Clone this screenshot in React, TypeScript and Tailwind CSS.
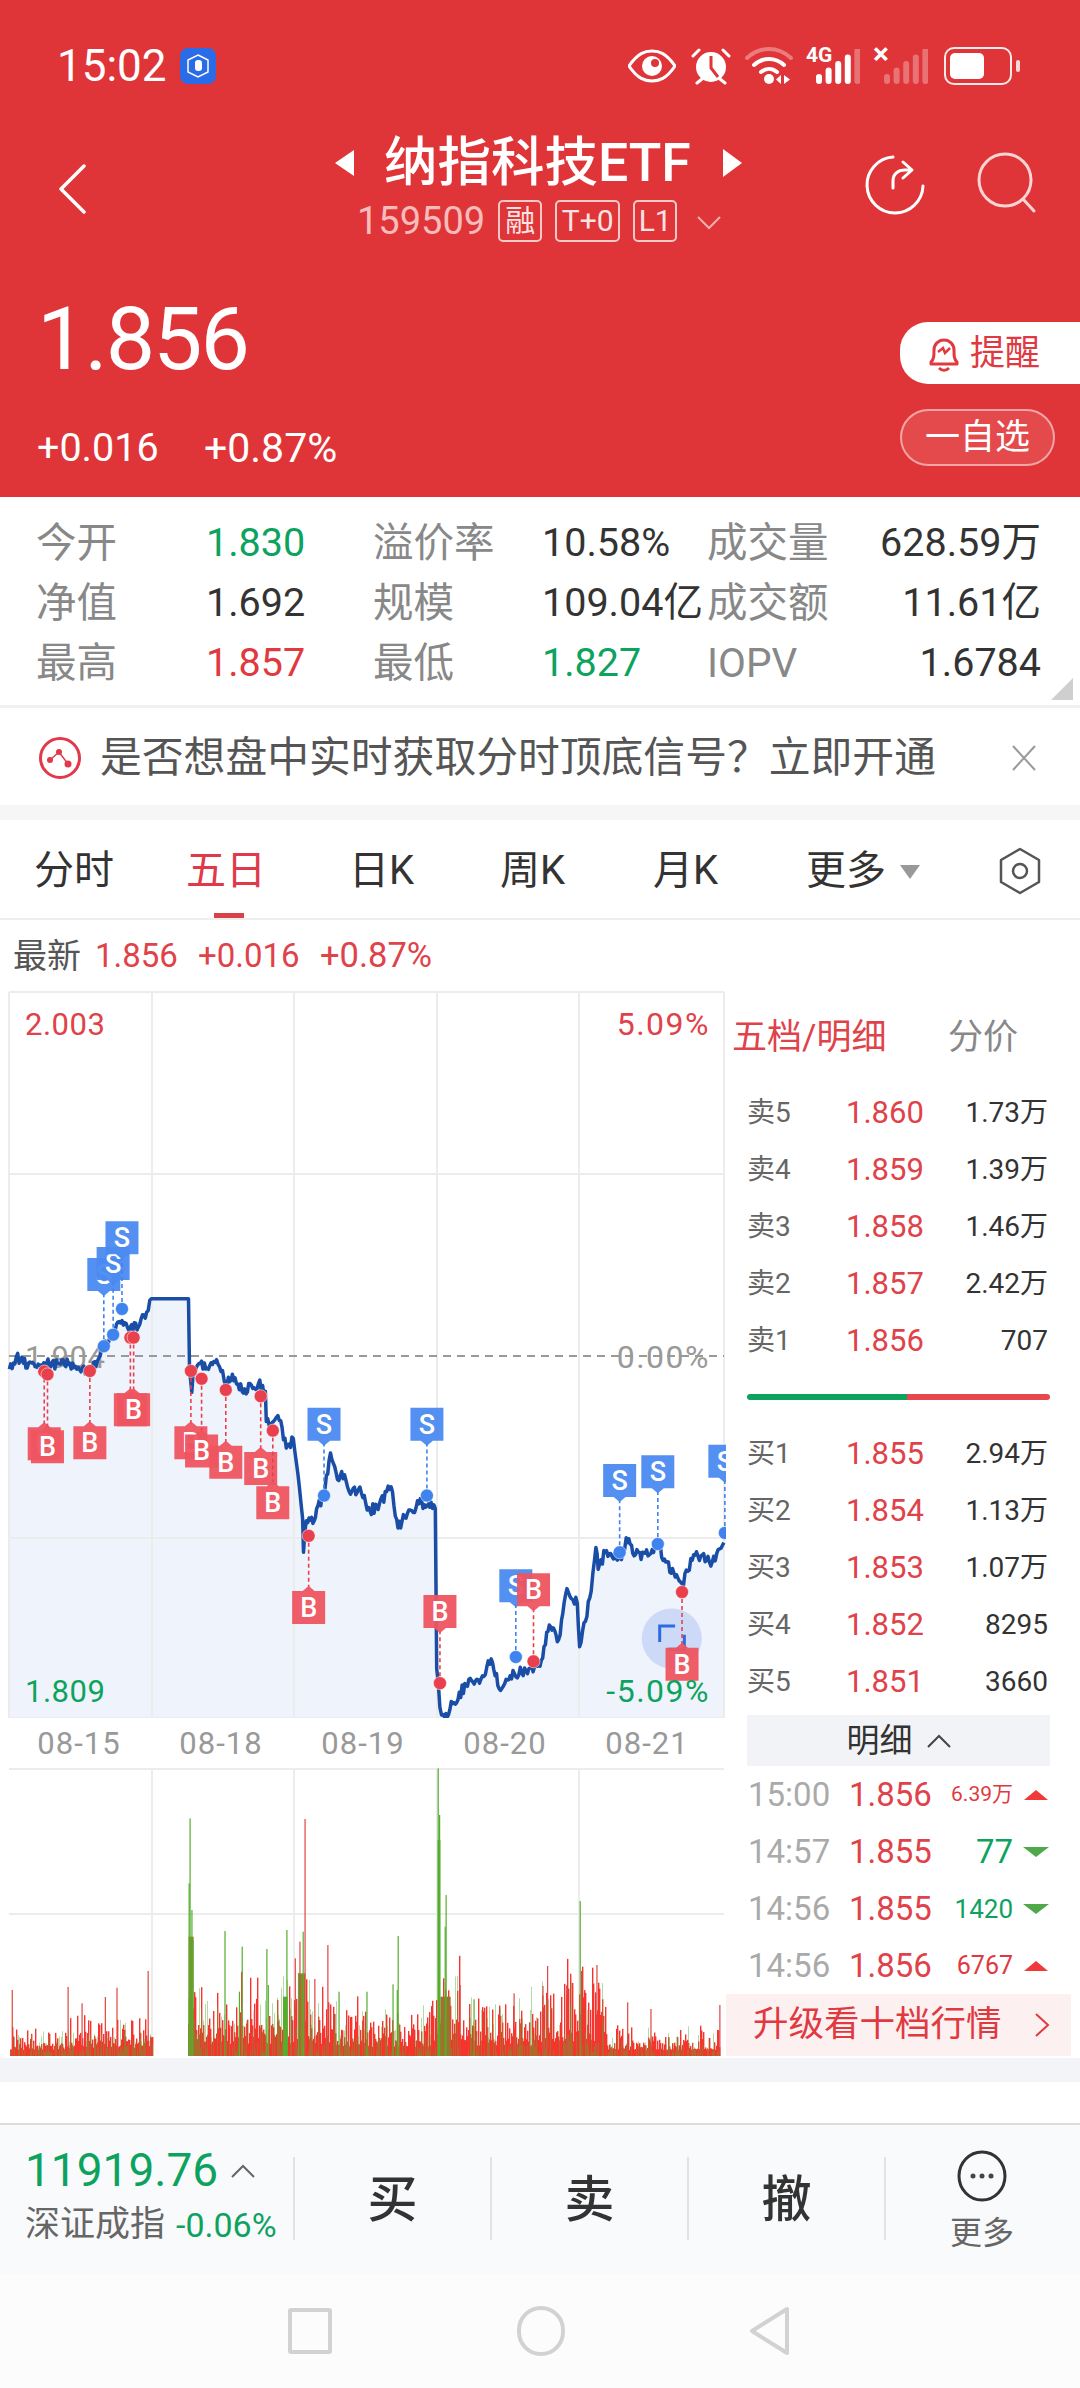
import type { ReactNode } from "react";

// crop coordinates from the chart zoom -> page pixels inside the svg
const X = (z: number) => z / 2.148;
const Y = (z: number) => z / 2.063 - 0;

const seeded = (seed: number) => {
  let s = seed;
  return () => {
    s = (s * 1664525 + 1013904223) % 4294967296;
    return s / 4294967296;
  };
};

const linePoints: [number, number][] = [
  [20, 782], [35, 757], [50, 770], [70, 768], [85, 775], [100, 770], [130, 772], [150, 770], [165, 782], [195, 785],
  [215, 755], [235, 720], [250, 690], [262, 682], [280, 695], [300, 690], [315, 665], [325, 637], [405, 637], [407, 780],
  [412, 830], [415, 790], [430, 770], [445, 780], [462, 768], [478, 785], [482, 808], [505, 800], [520, 828], [540, 815],
  [555, 812], [570, 828], [572, 890], [600, 888], [615, 945], [630, 925], [640, 1000], [650, 1090], [652, 1160], [658, 1095],
  [675, 1095], [680, 1070], [695, 1045], [710, 955], [725, 1010], [740, 1000], [750, 1035], [770, 1030], [795, 1075], [815, 1060],
  [840, 1025], [855, 1110], [875, 1080], [900, 1060], [920, 1060], [935, 1070], [938, 1400], [945, 1480], [955, 1500], [975, 1470],
  [1010, 1420], [1030, 1430], [1055, 1380], [1075, 1445], [1105, 1410], [1130, 1405], [1160, 1395], [1180, 1310], [1200, 1340], [1218, 1235],
  [1240, 1265], [1245, 1355], [1270, 1240], [1280, 1150], [1285, 1195], [1300, 1160], [1335, 1175], [1345, 1130], [1365, 1165], [1395, 1165],
  [1410, 1140], [1430, 1180], [1465, 1225], [1490, 1165], [1530, 1180], [1555, 1140],
];

const buildLine = () => {
  const rnd = seeded(7);
  const out: string[] = [];
  linePoints.forEach(([x, y], i) => {
    if (i === 0) {
      out.push(`${X(x).toFixed(1)},${Y(y).toFixed(1)}`);
      return;
    }
    const [px, py] = linePoints[i - 1];
    const steps = Math.max(1, Math.round((x - px) / 3));
    const flat = px === 325;
    for (let k = 1; k <= steps; k++) {
      const t = k / steps;
      const noise = flat || k === steps || steps === 1 ? 0 : (rnd() - 0.5) * 22;
      out.push(`${X(px + (x - px) * t).toFixed(1)},${Y(py + (y - py) * t + noise).toFixed(1)}`);
    }
  });
  return out;
};

const line = buildLine();

const sTags = [
  [223, 553, 735], [243, 530, 711], [262, 477, 658], [696, 862, 1043], [917, 862, 1043],
  [1108, 1195, 1376], [1331, 978, 1160], [1413, 960, 1143], [1557, 938, 1120],
];
const bBelow = [
  [95, 902, 787], [102, 908, 793], [193, 900, 786], [280, 832, 717], [287, 832, 717], [410, 900, 786],
  [433, 917, 802], [485, 940, 825], [560, 953, 838], [586, 1024, 909], [663, 1240, 1126], [1465, 1357, 1242],
];
const bAbove = [
  [945, 1248, 1430], [1146, 1203, 1385],
];

const Tag = ({ x, top, dot, label, pointUp }: { x: number; top: number; dot: number; label: string; pointUp: boolean }) => {
  const color = label === "S" ? "#4a8af0" : "#ee5460";
  const stem = label === "S" ? "#3f83ee" : "#e8404c";
  const l = X(x) - 16.5;
  const t = Y(top);
  const w = 33;
  const h = 33;
  const poly = pointUp
    ? `${l},${t} ${X(x) - 6},${t} ${X(x)},${t - 5} ${X(x) + 6},${t} ${l + w},${t} ${l + w},${t + h} ${l},${t + h}`
    : `${l},${t} ${l + w},${t} ${l + w},${t + h} ${X(x) + 6},${t + h} ${X(x)},${t + h + 5} ${X(x) - 6},${t + h} ${l},${t + h}`;
  return (
    <g>
      <line x1={X(x)} x2={X(x)} y1={Y(dot)} y2={pointUp ? t : t + h} stroke={stem} strokeWidth={1.6} strokeDasharray="4 3" />
      <circle cx={X(x)} cy={Y(dot)} r={6.5} fill={stem} stroke="#fff" strokeOpacity={0.5} strokeWidth={1} />
      <polygon points={poly} fill={color} fillOpacity={0.95} />
      <text x={X(x)} y={t + 26} textAnchor="middle" fontSize={27} fontWeight={500} fill="#fff">
        {label}
      </text>
    </g>
  );
};

const PriceChart = () => (
  <svg width={726} height={728} className="block">
    <polygon points={`${X(20)},${Y(1503)} ${line.join(" ")} ${X(1555)},${Y(1503)}`} fill="#eff3fc" />
    <g stroke="#ececec" strokeWidth={2}>
      <line x1={9} x2={724} y1={2} y2={2} />
      <line x1={9} x2={724} y1={184} y2={184} />
      <line x1={9} x2={724} y1={548} y2={548} />
      <line x1={9} x2={724} y1={728} y2={728} />
      {[9, 152, 294, 437, 579, 724].map((x) => (
        <line key={x} x1={x} x2={x} y1={2} y2={728} />
      ))}
    </g>
    <text x={25} y={45} fontSize={31} letterSpacing={0.5} fill="#e0424a">2.003</text>
    <text x={710} y={45} fontSize={32} letterSpacing={1.5} fill="#e0424a" textAnchor="end">5.09%</text>
    <text x={25} y={378} fontSize={31} letterSpacing={0.5} fill="#999">1.904</text>
    <text x={710} y={378} fontSize={32} letterSpacing={1.5} fill="#999" textAnchor="end">0.00%</text>
    <line x1={9} x2={724} y1={366} y2={366} stroke="#999" strokeWidth={2} strokeDasharray="8 6" />
    <polyline points={line.join(" ")} fill="none" stroke="#1a4ea6" strokeWidth={3.5} strokeLinejoin="round" />
    <text x={25} y={712} fontSize={31} letterSpacing={0.5} fill="#0da35f">1.809</text>
    <circle cx={X(1443)} cy={Y(1338)} r={30} fill="#3f78e8" fillOpacity={0.2} />
    <path d={`M${X(1417)} ${Y(1345)}V${Y(1312)}H${X(1450)}`} fill="none" stroke="#2f6be0" strokeWidth={3} />
    <path d={`M${X(1436)} ${Y(1360)}H${X(1470)}V${Y(1330)}`} fill="none" stroke="#2f6be0" strokeWidth={3} />
    {sTags.map(([x, t, d]) => (
      <Tag key={`s${x}`} x={x} top={t} dot={d} label="S" pointUp={false} />
    ))}
    {bBelow.map(([x, t, d]) => (
      <Tag key={`b${x}`} x={x} top={t} dot={d} label="B" pointUp />
    ))}
    {bAbove.map(([x, t, d]) => (
      <Tag key={`a${x}`} x={x} top={t} dot={d} label="B" pointUp={false} />
    ))}
    <text x={710} y={712} fontSize={32} letterSpacing={1.5} fill="#0da35f" textAnchor="end">-5.09%</text>
  </svg>
);

const greenSpikes = [
  [407, 235], [405, 430], [411, 510], [413, 600], [482, 573], [519, 620], [572, 627], [575, 735], [615, 570], [640, 700], [650, 575],
  [854, 588], [843, 733], [852, 750], [940, 85], [943, 225], [957, 465], [955, 560], [1245, 483], [1017, 778], [787, 755], [727, 755], [513, 755],
];
const redSpikes = [
  [25, 750], [145, 741], [175, 790], [225, 771], [250, 743], [317, 693], [654, 237], [643, 605], [633, 655], [703, 615], [675, 717],
  [987, 735], [1103, 760], [1165, 738], [1175, 678], [1216, 736], [1248, 693], [1281, 675], [1347, 787], [1397, 807], [1545, 795], [545, 810],
];
// thick olive/green lumps right after the opens, [from, to, top, colour]
const lumps: [number, number, number, string][] = [
  [405, 416, 590, "#9a7a2c"], [608, 618, 770, "#55ae2e"], [640, 656, 700, "#8c8a2e"], [940, 946, 300, "#55ae2e"], [946, 968, 770, "#a0702c"],
];

const VolumeChart = () => {
  const rnd = seeded(42);
  const bars: ReactNode[] = [];
  const base = 288;
  for (let x = 10; x < 720; x += 1) {
    if (x > 152 && x < 188) continue;
    const z = x * 2.148;
    let env = 12;
    if (z > 150 && z < 330) env = 20;
    if (z > 400 && z < 720) env = 36;
    if (z > 720 && z < 940) env = 24;
    if (z > 940 && z < 1010) env = 46;
    if (z > 1010 && z < 1160) env = 28;
    if (z > 1160 && z < 1300) env = 44;
    const h = env * 0.25 + 3 + rnd() * rnd() * env * 2.2;
    bars.push(<rect key={`r${x}`} x={x} y={base - h} width={1.4} height={h} fill="#f5352d" />);
    if (rnd() > 0.45) {
      const g = 3 + rnd() * rnd() * env * 2.6;
      bars.push(<rect key={`g${x}`} x={x} y={base - g} width={0.8} height={g} fill="#55ae2e" fillOpacity={0.55} />);
    }
  }
  return (
    <svg width={726} height={290} className="block">
      <g stroke="#ececec" strokeWidth={2}>
        <line x1={9} x2={724} y1={1} y2={1} />
        <line x1={9} x2={724} y1={146} y2={146} />
        {[152, 294, 437, 579].map((x) => (
          <line key={x} x1={x} x2={x} y1={1} y2={288} />
        ))}
      </g>
      {bars}
      {lumps.map(([a, b, t, c]) => (
        <rect key={`l${a}`} x={X(a)} y={t / 3 - 28} width={X(b) - X(a)} height={288 - (t / 3 - 28)} fill={c} />
      ))}
      {redSpikes.map(([x, t]) => (
        <rect key={`rs${x}`} x={X(x)} y={t / 3 - 28} width={1.2} height={288 - (t / 3 - 28)} fill="#e0463f" />
      ))}
      {greenSpikes.map(([x, t]) => (
        <rect key={`gs${x}`} x={X(x)} y={t / 3 - 28} width={1.2} height={288 - (t / 3 - 28)} fill="#55ae2e" />
      ))}
    </svg>
  );
};

const Signal = ({ dim }: { dim: number }) => (
  <svg width={44} height={36} viewBox="0 0 44 36">
    {[0, 1, 2, 3, 4].map((i) => {
      const h = 10 + i * 6.5;
      return <rect key={i} x={i * 9.6} y={35 - h} width={6} height={h} rx={3} fill="#fff" fillOpacity={i >= dim ? 0.3 : 1} />;
    })}
  </svg>
);

const StatusBar = () => (
  <div className="flex h-[130px] items-center pl-[57px] pr-[60px] pt-[2px]">
    <span className="text-[44px] leading-none text-white">15:02</span>
    <span className="ml-[13px] flex h-[36px] w-[36px] items-center justify-center rounded-[8px] bg-[#2a6be8]">
      <svg width={24} height={26} viewBox="0 0 24 26">
        <polygon points="12,2 22,7 22,19 12,24 2,19 2,7" fill="none" stroke="#fff" strokeWidth={1.5} />
        <rect x={9} y={7} width={7} height={11} rx={3} fill="#fff" />
      </svg>
    </span>
    <div className="ml-auto flex items-center">
      <svg width={48} height={34} viewBox="0 0 48 34">
        <path d="M1 17C10 4 17 2 24 2s14 2 23 15c-9 13-16 15-23 15S10 30 1 17Z" fill="none" stroke="#fff" strokeWidth={3} />
        <circle cx={24} cy={17} r={10} fill="#fff" />
        <circle cx={27} cy={14} r={4} fill="#e03538" />
      </svg>
      <svg width={40} height={38} viewBox="0 0 40 38" className="ml-[15px]">
        <circle cx={20} cy={20} r={15} fill="#fff" />
        <path d="M20 9v12l7 9" fill="none" stroke="#e03538" strokeWidth={3} />
        <path d="M2 9l6-6M38 9l-6-6M6 36l5-4M34 36l-5-4" stroke="#fff" strokeWidth={3} strokeLinecap="round" />
      </svg>
      <svg width={48} height={38} viewBox="0 0 48 38" className="ml-[14px]">
        <path d="M2 11C15 -1 33 -1 46 11" fill="none" stroke="#fff" strokeOpacity={0.35} strokeWidth={4} strokeLinecap="round" />
        <path d="M9 18c9-8 21-8 30 0" fill="none" stroke="#fff" strokeWidth={4} strokeLinecap="round" />
        <path d="M16 25c5-4 11-4 16 0" fill="none" stroke="#fff" strokeWidth={4} strokeLinecap="round" />
        <circle cx={24} cy={32} r={5} fill="#fff" />
        <path d="M36 28v9l-5-4.500ZM39 28v9l6-4.500Z" fill="#fff" />
      </svg>
      <div className="relative ml-[13px] flex h-[38px] w-[54px] items-end justify-end">
        <span className="absolute left-0 -top-[1px] text-[21px] font-bold leading-[18px] text-white">4G</span>
        <Signal dim={4} />
      </div>
      <div className="relative ml-[14px] flex h-[38px] w-[54px] items-end justify-end">
        <span className="absolute -left-[1px] -top-[2px] text-[30px] font-bold leading-[18px] text-white">×</span>
        <Signal dim={0} />
      </div>
      <div className="ml-[16px] flex h-[38px] w-[68px] items-center rounded-[10px] border-2 border-white/90 p-[4px]">
        <span className="block h-full w-[34px] rounded-[5px] bg-white" />
      </div>
      <span className="ml-[4px] block h-[12px] w-[4px] rounded-[2px] bg-white/80" />
    </div>
  </div>
);

const Badge = ({ children, w }: { children: ReactNode; w: string }) => (
  <span className={`ml-[13px] flex h-[42px] items-center justify-center rounded-[5px] border-2 border-[#f6c9c9] text-[30px] leading-none text-[#fbe3e3] ${w}`}>
    {children}
  </span>
);

const Header = () => (
  <header className="h-[497px] bg-[#e03538] text-white">
    <StatusBar />
    <div className="flex h-[120px]">
      <div className="w-[335px] pl-[58px] pt-[34px]">
        <svg width={30} height={50} viewBox="0 0 30 50">
          <path d="M27 2 4 25l23 23" fill="none" stroke="#fff" strokeWidth={3.500} strokeLinecap="round" strokeLinejoin="round" transform="translate(-1 0)" />
        </svg>
      </div>
      <div className="w-[408px]">
        <div className="flex h-[66px] items-center">
          <span className="h-0 w-0 border-y-[13px] border-r-[19px] border-y-transparent border-r-white" />
          <span className="ml-[30px] whitespace-nowrap text-[53.500px] font-medium leading-none">纳指科技ETF</span>
          <span className="ml-[32px] h-0 w-0 border-y-[14px] border-l-[19px] border-y-transparent border-l-white" />
        </div>
        <div className="flex h-[50px] items-center pl-[22px]">
          <span className="text-[38px] leading-none text-[#f6bcbc]">159509</span>
          <Badge w="w-[44px]">融</Badge>
          <Badge w="w-[65px]">T+0</Badge>
          <Badge w="w-[44px]">L1</Badge>
          <svg width={24} height={14} viewBox="0 0 24 14" className="ml-[20px] mt-[4px]">
            <path d="M1 1l11 11L23 1" fill="none" stroke="#f3b0b0" strokeWidth={2} />
          </svg>
        </div>
      </div>
      <div className="flex flex-1 items-start pl-[122px] pt-[24px]">
        <svg width={60} height={62} viewBox="0 0 60 62">
          <path d="M28 3A28 28 0 1 0 58 32" fill="none" stroke="#fff" strokeWidth={3} strokeLinecap="round" />
          <path d="M28 34v-7c0-7 5-11 12-11h6M38 8l9 8-9 8" fill="none" stroke="#fff" strokeWidth={3} strokeLinecap="round" strokeLinejoin="round" />
        </svg>
        <svg width={62} height={62} viewBox="0 0 62 62" className="ml-[52px] -mt-[2px]">
          <circle cx={28} cy={28} r={26} fill="none" stroke="#fbd4d4" strokeWidth={3} />
          <path d="M46 47l11 12" fill="none" stroke="#fbd4d4" strokeWidth={3} strokeLinecap="round" />
        </svg>
      </div>
    </div>
    <div className="flex justify-between">
      <div className="pl-[37px] pt-[44px]">
        <div className="text-[88px] leading-[90px] tracking-[-2px]">1.856</div>
        <div className="mt-[39px] flex text-[39.500px] leading-[50px]">
          <span className="w-[167px]">+0.016</span>
          <span className="text-[41px]">+0.87%</span>
        </div>
      </div>
      <div className="w-[180px] pt-[72px]">
        <div className="flex h-[62px] items-center rounded-l-[28px] bg-white pl-[27px] text-[35px] leading-none text-[#e0393f]">
          <svg width={34} height={40} viewBox="0 0 34 40" className="mr-[9px]">
            <path d="M4 29c3-3 3-6 3-12a10 10 0 0 1 20 0c0 6 0 9 3 12v2H4Z" fill="none" stroke="#e0393f" strokeWidth={3} strokeLinejoin="round" />
            <path d="M11 19l5-4 2 5 5-5" fill="none" stroke="#e0393f" strokeWidth={2.500} />
            <path d="M12 35c3 3 7 3 10 0" fill="none" stroke="#e0393f" strokeWidth={3} />
          </svg>
          提醒
        </div>
        <div className="mt-[25px] flex h-[57px] w-[155px] items-center justify-center rounded-full border-2 border-[#f3a5a5] bg-[#e44a4c] text-[35px] leading-none">
          一自选
        </div>
      </div>
    </div>
  </header>
);

const stats = [
  ["今开", "1.830", "text-[#0da35f]", "溢价率", "10.58%", "text-[#333]", "成交量", "628.59万"],
  ["净值", "1.692", "text-[#333]", "规模", "109.04亿", "text-[#333]", "成交额", "11.61亿"],
  ["最高", "1.857", "text-[#e0393f]", "最低", "1.827", "text-[#0da35f]", "IOPV", "1.6784"],
];

const Stats = () => (
  <section className="relative h-[211px] border-b-[3px] border-[#f0f0f0] pl-[36px] pr-[39px] pt-[16px]">
    {stats.map((r) => (
      <div key={r[0]} className="grid h-[60px] grid-cols-[170px_167px_169px_165px_1fr_auto] items-center text-[39.500px] leading-none">
        <span className="text-[40.500px] text-[#888]">{r[0]}</span>
        <span className={r[2]}>{r[1]}</span>
        <span className="text-[40.500px] text-[#888]">{r[3]}</span>
        <span className={`whitespace-nowrap ${r[5]}`}>{r[4]}</span>
        <span className="text-[40.500px] text-[#888]">{r[6]}</span>
        <span className="text-right text-[#333]">{r[7]}</span>
      </div>
    ))}
    <span className="absolute bottom-[5px] right-[7px] h-0 w-0 border-b-[22px] border-l-[22px] border-b-[#cfcfcf] border-l-transparent" />
  </section>
);

const Notice = () => (
  <section className="flex h-[97px] items-center pl-[39px] pt-[2px]">
    <svg width={42} height={42} viewBox="0 0 42 42">
      <circle cx={21} cy={21} r={19.500} fill="none" stroke="#e0394a" strokeWidth={3} />
      <path d="M11 23l9-8 9 12" fill="none" stroke="#e0394a" strokeWidth={1.500} />
      <circle cx={11} cy={23} r={3} fill="#e0394a" />
      <circle cx={20} cy={15} r={3} fill="#e0394a" />
      <circle cx={29} cy={27} r={3.500} fill="#e0394a" />
    </svg>
    <span className="ml-[19px] whitespace-nowrap text-[41.800px] leading-none text-[#555]">是否想盘中实时获取分时顶底信号？立即开通</span>
    <svg width={28} height={28} viewBox="0 0 28 28" className="ml-[74px]">
      <path d="M3 2l22 24M25 2 3 26" fill="none" stroke="#999" strokeWidth={2} />
    </svg>
  </section>
);

const tabs = [
  ["分时", "w-[152px] text-[#333]"],
  ["五日", "w-[163px] text-[#e0394a]"],
  ["日K", "w-[151px] text-[#333]"],
  ["周K", "w-[153px] text-[#333]"],
  ["月K", "w-[153px] text-[#333]"],
];

const Tabs = () => (
  <nav className="relative flex h-[100px] items-center border-b-2 border-[#eee] pl-[34px] pt-[4px] text-[40px] leading-none">
    {tabs.map(([t, c]) => (
      <span key={t} className={c}>{t}</span>
    ))}
    <span className="text-[#333]">更多</span>
    <span className="ml-[14px] mt-[2px] h-0 w-0 border-x-[10px] border-t-[14px] border-x-transparent border-t-[#999]" />
    <svg width={44} height={48} viewBox="0 0 44 48" className="ml-[78px]">
      <polygon points="22,2 41,13 41,35 22,46 3,35 3,13" fill="none" stroke="#555" strokeWidth={2.500} strokeLinejoin="round" />
      <circle cx={22} cy={24} r={7} fill="none" stroke="#555" strokeWidth={2.500} />
    </svg>
    <span className="absolute bottom-0 left-[214px] h-[5px] w-[30px] bg-[#d9404a]" />
  </nav>
);

const sells = [
  ["卖5", "1.860", "1.73万"], ["卖4", "1.859", "1.39万"], ["卖3", "1.858", "1.46万"], ["卖2", "1.857", "2.42万"], ["卖1", "1.856", "707"],
];
const buys = [
  ["买1", "1.855", "2.94万"], ["买2", "1.854", "1.13万"], ["买3", "1.853", "1.07万"], ["买4", "1.852", "8295"], ["买5", "1.851", "3660"],
];
const ticks = [
  ["15:00", "1.856", "6.39万", "text-[21px] text-[#e0393f]", true],
  ["14:57", "1.855", "77", "text-[33px] text-[#0da35f]", false],
  ["14:56", "1.855", "1420", "text-[26px] text-[#0da35f]", false],
  ["14:56", "1.856", "6767", "text-[25px] text-[#e0393f]", true],
] as const;

const Quote = ({ r }: { r: string[] }) => (
  <div className="flex h-[57px] items-center pl-[21px] leading-none">
    <span className="w-[99px] text-[28px] text-[#666]">{r[0]}</span>
    <span className="w-[81px] text-[31px] text-[#e0424a]">{r[1]}</span>
    <span className="w-[121px] text-right text-[28px] text-[#333]">{r[2]}</span>
  </div>
);

const OrderBook = () => (
  <aside className="w-[354px]">
    <div className="flex h-[94px] items-center pl-[6px] text-[35px] leading-none">
      <span className="w-[216px] text-[#e0424a]">五档/明细</span>
      <span className="text-[#888]">分价</span>
    </div>
    {sells.map((r) => (
      <Quote key={r[0]} r={r} />
    ))}
    <div className="flex h-[56px] items-center pl-[21px]">
      <span className="h-[6px] w-[160px] rounded-l-full bg-[#0da35f]" />
      <span className="h-[6px] w-[143px] rounded-r-full bg-[#e8474d]" />
    </div>
    {buys.map((r) => (
      <Quote key={r[0]} r={r} />
    ))}
    <div className="ml-[21px] mt-[5px] flex h-[51px] w-[303px] items-center justify-center bg-[#f2f3f7] text-[33px] leading-none text-[#333]">
      明细
      <svg width={24} height={14} viewBox="0 0 24 14" className="ml-[14px]">
        <path d="M1 13 12 2l11 11" fill="none" stroke="#444" strokeWidth={2} />
      </svg>
    </div>
    {ticks.map(([time, price, qty, cls, up]) => (
      <div key={time + qty} className="flex h-[57px] items-center pl-[22px] text-[33px] leading-none">
        <span className="w-[101px] text-[#aaa]">{time}</span>
        <span className="w-[84px] text-[#e0424a]">{price}</span>
        <span className={`w-[80px] text-right ${cls}`}>{qty}</span>
        {up ? (
          <span className="ml-[11px] h-0 w-0 border-x-[12px] border-b-[10px] border-x-transparent border-b-[#f03a3a]" />
        ) : (
          <span className="ml-[10px] h-0 w-0 border-x-[13px] border-t-[10px] border-x-transparent border-t-[#4fa84a]" />
        )}
      </div>
    ))}
    <div className="flex h-[62px] w-[345px] items-center bg-[#fdf0f0] pl-[27px] text-[35.500px] leading-none text-[#e0393f]">
      升级看十档行情
      <svg width={16} height={26} viewBox="0 0 16 26" className="ml-[32px]">
        <path d="M2 2l12 11L2 24" fill="none" stroke="#e0393f" strokeWidth={2} />
      </svg>
    </div>
  </aside>
);

const ActionButton = ({ children }: { children: string }) => (
  <div className="flex h-[83px] w-[197px] items-center justify-center border-l-2 border-[#e2e2e2] pt-[2px] text-[50px] font-medium leading-none text-[#333]">
    {children}
  </div>
);

const BottomBar = () => (
  <footer className="h-[151px] border-t-2 border-[#dcdcdc] bg-[#f9fafc]">
    <div className="flex items-start pt-[32px]">
      <div className="-mt-[10px] w-[293px] pl-[25px]">
        <div className="flex items-center text-[46px] leading-[46px] text-[#0da35f]">
          11919.76
          <svg width={24} height={14} viewBox="0 0 24 14" className="ml-[13px] mt-[2px]">
            <path d="M1 13 12 2l11 11" fill="none" stroke="#666" strokeWidth={2} />
          </svg>
        </div>
        <div className="mt-[14px] flex items-center whitespace-nowrap leading-none">
          <span className="text-[35px] text-[#666]">深证成指</span>
          <span className="ml-[11px] text-[34px] text-[#0da35f]">-0.06%</span>
        </div>
      </div>
      <ActionButton>买</ActionButton>
      <ActionButton>卖</ActionButton>
      <ActionButton>撤</ActionButton>
      <div className="h-[83px] flex-1 border-l-2 border-[#e2e2e2] pr-[2px]">
        <div className="-mt-[7px] flex flex-col items-center">
          <svg width={50} height={52} viewBox="0 0 50 52">
            <ellipse cx={25} cy={26} rx={23} ry={24} fill="none" stroke="#333" strokeWidth={3} />
            <circle cx={16} cy={26} r={2.500} fill="#444" />
            <circle cx={25} cy={26} r={2.500} fill="#444" />
            <circle cx={34} cy={26} r={2.500} fill="#444" />
          </svg>
          <span className="mt-[15px] text-[32px] leading-none text-[#666]">更多</span>
        </div>
      </div>
    </div>
  </footer>
);

const SystemNav = () => (
  <div className="flex h-[114px] items-center justify-center bg-[#fcfcfc] pr-[2px]">
    <span className="h-[46px] w-[44px] rounded-[3px] border-[4px] border-[#d2d2d2]" />
    <span className="ml-[185px] h-[50px] w-[48px] rounded-full border-[4px] border-[#d2d2d2]" />
    <svg width={42} height={50} viewBox="0 0 42 50" className="ml-[184px]">
      <path d="M38 3v44L3 25Z" fill="none" stroke="#d2d2d2" strokeWidth={4} strokeLinejoin="round" />
    </svg>
  </div>
);

export default function App() {
  return (
    <div className="h-[2388px] w-[1080px] overflow-hidden bg-white [font-family:Roboto,'Noto_Sans_CJK_SC',sans-serif]">
      <Header />
      <Stats />
      <Notice />
      <div className="h-[15px] bg-[#f6f6f6]" />
      <Tabs />
      <div className="flex h-[70px] items-center pl-[13px] pt-[1px] text-[33px] leading-none text-[#e0424a]">
        <span className="w-[82px] text-[34px] text-[#555]">最新</span>
        <span className="w-[103px]">1.856</span>
        <span className="w-[122px]">+0.016</span>
        <span className="text-[34.500px]">+0.87%</span>
      </div>
      <div className="flex h-[1068px]">
        <div className="w-[726px]">
          <PriceChart />
          <div className="flex h-[50px] items-center pl-[8px] text-[31px] leading-none tracking-[1px] text-[#999]">
            {["08-15", "08-18", "08-19", "08-20", "08-21"].map((d) => (
              <span key={d} className="w-[142px] text-center">{d}</span>
            ))}
          </div>
          <VolumeChart />
        </div>
        <OrderBook />
      </div>
      <div className="h-[24px] bg-[#f3f4f8]" />
      <div className="h-[41px]" />
      <BottomBar />
      <SystemNav />
    </div>
  );
}
